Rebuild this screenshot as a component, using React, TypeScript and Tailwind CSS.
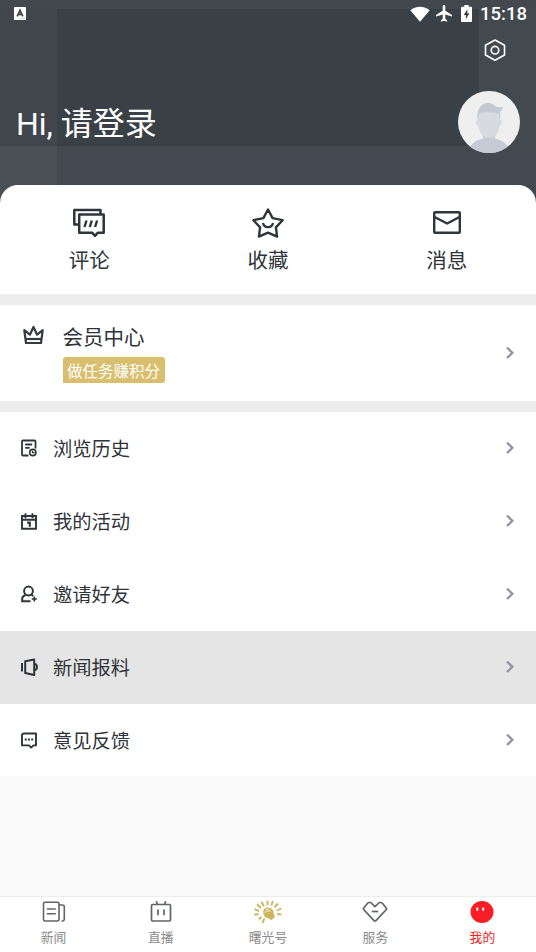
import type { ReactNode } from "react"

interface IconProps {
  className?: string
}

interface RowItem {
  label: string
  icon: ReactNode
  active?: boolean
}

function KeyboardIcon() {
  return (
    <svg className="w-3 h-[13px]" viewBox="0 0 12 13" fill="none">
      <rect width="12" height="13" rx="0.8" fill="#fff" />
      <path d="M3.2 9.3 6 3.2l2.8 6.1M4.2 7.4h3.6" stroke="#3c4349" strokeWidth="1.7" />
      <path d="M6.5 11.5h4.5" stroke="#9a9ea2" strokeWidth="0.8" strokeDasharray="1 0.6" />
    </svg>
  )
}

function WifiIcon() {
  return (
    <svg className="w-5 h-4" viewBox="0 0 20 16" fill="#fff">
      <path d="M0.3 4.2C5.5-.5 14.5-.5 19.7 4.2L10 15.8z" />
    </svg>
  )
}

function PlaneIcon() {
  return (
    <svg className="w-4 h-[17px]" viewBox="0 0 16 17" fill="#fff">
      <path d="M16 11.600V9.900L9.300 5.700V1.300a1.300 1.300 0 0 0-2.600 0v4.400L0 9.900v1.700l6.700-2.100v4.400L4.900 15.300v1.400l3.100-.9 3.100.9v-1.400l-1.800-1.400V9.500z" />
    </svg>
  )
}

function BatteryIcon() {
  return (
    <svg className="w-[11px] h-[17px]" viewBox="0 0 11 17">
      <path d="M3.300 0h4.400v1.700H10q1 0 1 1V16q0 1-1 1H1q-1 0-1-1V2.700q0-1 1-1h2.300z" fill="#fff" />
      <path d="M6.400 4.300 2.700 10h2.200v4.300l3.500-6H6.300z" fill="#3b4248" />
    </svg>
  )
}

function SettingsIcon() {
  return (
    <svg className="w-6 h-6" viewBox="0 0 24 24" fill="none" stroke="#fff" strokeWidth="1.6" strokeLinejoin="round">
      <path d="m12 2 9.500 5.200v9.800L12 22.300 2.500 17V7.200z" />
      <circle cx="12" cy="12.200" r="3.800" />
    </svg>
  )
}

function Avatar() {
  return (
    <svg className="w-[62px] h-[62px] rounded-full" viewBox="0 0 62 62">
      <rect width="62" height="62" fill="#efefef" />
      <path d="M12 58c1-6 5-8 13-10.500h12c8 2.500 12 4.500 13 10.500L44 62H18z" fill="#c5cad4" />
      <path d="M25 42h12v7q-6 4-12 0z" fill="#c5cad4" />
      <path d="M19.500 29c-2-.5-2 5 .8 6 .7 5 3 8.500 5.700 10.500 2.500 1.800 8 1.800 10.500 0 2.700-2 4.500-5.500 5.200-10.500 2.800-1 2.600-6.500.6-6l-.8-9H20z" fill="#d7dbe0" />
      <path d="M20 29c-2-9 2-17 10-17 4 0 5 1.500 8 3.500 2.500 1 5 .8 7 .5-.2 2.500-1.500 4-3.300 4.500 1 2.500.8 5.500.3 8.500l-1.200-6.500c-5-2-14-1.500-19.500-.5z" fill="#c3c9d3" />
    </svg>
  )
}

function CommentIcon() {
  return (
    <svg className="w-8 h-[30px]" viewBox="0 0 32 30" fill="none" stroke="#30343b" strokeWidth="2.5">
      <path d="M5 16.500H1.300V2H27.500v4" strokeLinejoin="round" />
      <path d="M6.200 6.500h24.500v18.300h-6L22 27.800l-2.700-3H6.200z" strokeLinejoin="round" />
      <path d="m13.500 12.500-2 6.500M18.800 12.500l-2 6.500M24.100 12.500l-2 6.500" strokeWidth="2.4" />
    </svg>
  )
}

function StarIcon() {
  return (
    <svg className="w-8 h-[30px]" viewBox="0 0 32 30" fill="none" stroke="#30343b" strokeWidth="2.4" strokeLinejoin="round">
      <path d="m16 1.500 4.600 8.600 10 2.100-6.700 7.200 1.200 9.200L16 24.700l-9.100 3.900 1.200-9.200L1.400 12.200l10-2.100z" />
      <path d="M11 15c.8 5.400 9.200 5.400 10 0" strokeWidth="2.200" />
    </svg>
  )
}

function MailIcon() {
  return (
    <svg className="w-7 h-[23px]" viewBox="0 0 28 23" fill="none" stroke="#30343b" strokeWidth="2.4" strokeLinejoin="round">
      <rect x="1.200" y="1.200" width="25.600" height="20.600" rx="0.800" />
      <path d="m1.500 6 12.700 6.500L26.500 6" />
    </svg>
  )
}

function CrownIcon() {
  return (
    <svg className="w-[21px] h-5" viewBox="0 0 21 20" fill="none" stroke="#363b42" strokeWidth="2.2" strokeLinejoin="round">
      <path d="M3 18 1.300 5.200l5.600 4.500L10.500 2l3.600 7.700 5.600-4.500L18 18z" />
      <path d="M3 14h15" />
    </svg>
  )
}

function HistoryIcon() {
  return (
    <svg className="w-4 h-[18px]" viewBox="0 0 16 18" fill="none" stroke="#30353b" strokeWidth="1.8">
      <path d="M7.500 16.500H2q-1 0-1-1v-13q0-1 1-1h11.500q1 0 1 1v7" />
      <path d="M4.200 5.500h7M4.200 8.800h4.500" />
      <circle cx="11.800" cy="13.500" r="3.100" strokeWidth="1.600" />
      <path d="M11.500 11.800v1.900h2" strokeWidth="1.200" />
    </svg>
  )
}

function CalendarIcon() {
  return (
    <svg className="w-4 h-[17px]" viewBox="0 0 16 17" fill="none" stroke="#30353b" strokeWidth="1.9">
      <path d="M1 3h14v12.700H1zM0 6.800h16M4.500 .3v5M11.500 .3v5" />
      <path d="M6.200 9.600h2.600v4.200" strokeWidth="2.100" />
    </svg>
  )
}

function InviteIcon() {
  return (
    <svg className="w-[17px] h-[18px]" viewBox="0 0 17 18" fill="none" stroke="#30353b" strokeWidth="2">
      <circle cx="7.500" cy="6" r="4.400" />
      <path d="M4.500 9.800C2.500 10.800 1.200 12 1.200 13.500v2.700h8.300M10.500 9.800q1 .6 1.800 1.300" />
      <path d="M13.300 11.500v5M10.800 14h5" strokeWidth="1.700" />
    </svg>
  )
}

function HornIcon() {
  return (
    <svg className="w-[17px] h-[18px]" viewBox="0 0 17 18" fill="none" stroke="#30353b" strokeWidth="2">
      <path d="M1 5v8.500" />
      <path d="m4.200 3.200 9-1.800v15.700l-9-2z" strokeLinejoin="round" />
      <path d="M13.500 6q2.400 0 2.400 3t-2.400 3" />
    </svg>
  )
}

function FeedbackIcon() {
  return (
    <svg className="w-4 h-[17px]" viewBox="0 0 16 17" fill="none" stroke="#30353b" strokeWidth="1.9">
      <path d="M3 1.500h12v11.900h-2.500L10.200 15.600 8 13.400H1V3.500q0-2 2-2z" strokeLinejoin="round" />
      <path d="M3.800 7.400h2M7 7.400h2M10.200 7.400h2" strokeWidth="2" />
    </svg>
  )
}

function Chevron({ className }: IconProps) {
  return (
    <svg className={className} width="8" height="14" viewBox="0 0 8 14" fill="none" stroke="#9293a5" strokeWidth="2.3">
      <path d="m1 1.600 5.400 5.200L1 12" />
    </svg>
  )
}

function NewsIcon() {
  return (
    <svg className="w-6 h-6" viewBox="0 0 24 24" fill="none" stroke="#62646b" strokeWidth="1.6">
      <rect x="1.500" y="2.300" width="15.500" height="18.700" rx="1.500" />
      <path d="M4.800 9h9M4.800 13.800h9M17 5h3.300q2 0 2 2v12q0 2-2 2h-.8" />
    </svg>
  )
}

function LiveIcon() {
  return (
    <svg className="w-6 h-6" viewBox="0 0 24 24" fill="none" stroke="#62646b" strokeWidth="1.7">
      <rect x="2.500" y="4.500" width="19" height="16.500" rx="1.200" />
      <path d="m7.300 1.200 1.200 3.300M16.700 1.200l-1.200 3.300M9 9.500v5.800M15 9.500v5.800" />
    </svg>
  )
}

function SunIcon() {
  return (
    <svg className="w-[30px] h-6" viewBox="0 0 30 24" fill="none" stroke="#cfb45f">
      <path
        d="m1.300 14.800 4.500-.7M1.500 9.200l4.600 1.900M4 4.300l4 3.700M8.500 1.800l2.400 4.400M14.500 .7v4.500M19.800 1l-1.400 4.500M25 3.500l-3.500 3.800M28.300 8.500l-4.700 2M28.500 14.600l-4.400-.8M5.800 19.300 8.500 17M9.300 23.200l2.200-4.700"
        strokeWidth="1.9"
      />
      <path d="M10.300 12.800c-.8-3.500 2-5.600 5-5.400 3.300.2 5.700 2.800 5.300 6l1.400 3.700-3.600 3-3.200-1.800c-2.900 0-4.600-2.200-4.900-5.500z" fill="#cfb45f" stroke="none" />
      <path d="M11.500 12.800c1.200-1.500 4.700-2.300 6.500-1.800M12.500 9.700l3.600-.8" stroke="#fff" strokeWidth=".8" />
    </svg>
  )
}

function ServiceIcon() {
  return (
    <svg className="w-[26px] h-6" viewBox="0 0 26 24" fill="none" stroke="#62646b" strokeWidth="1.7" strokeLinejoin="round">
      <path d="M7 2.500h1.700L13 6.600l4.300-4.100H19q.7 0 1.200.5l4.200 5.200q.5.700-.1 1.300L14 20.700q-1 .9-2 0L1.700 9.500q-.6-.6-.1-1.300L5.800 3q.5-.5 1.200-.5z" />
      <path d="M9.800 11.500h6.400" />
    </svg>
  )
}

function MineIcon() {
  return (
    <svg className="w-6 h-6" viewBox="0 0 24 24">
      <ellipse cx="12" cy="12" rx="11.500" ry="11" fill="#fb1d25" />
      <path d="M7.300 7.500v3.300M13.200 7.500v3.300" stroke="#fff" strokeWidth="2" />
    </svg>
  )
}

const shortcuts = [
  { label: "评论", icon: <CommentIcon /> },
  { label: "收藏", icon: <StarIcon /> },
  { label: "消息", icon: <MailIcon /> },
]

const rows: RowItem[] = [
  { label: "浏览历史", icon: <HistoryIcon /> },
  { label: "我的活动", icon: <CalendarIcon /> },
  { label: "邀请好友", icon: <InviteIcon /> },
  { label: "新闻报料", icon: <HornIcon />, active: true },
  { label: "意见反馈", icon: <FeedbackIcon /> },
]

const tabs = [
  { label: "新闻", icon: <NewsIcon /> },
  { label: "直播", icon: <LiveIcon /> },
  { label: "曙光号", icon: <SunIcon /> },
  { label: "服务", icon: <ServiceIcon /> },
  { label: "我的", icon: <MineIcon />, active: true },
]

export default function App() {
  return (
    <div className="w-[536px] h-[952px] flex flex-col overflow-hidden bg-[#fafafa] text-[#30343a] font-[Roboto,'Noto_Sans_CJK_SC',sans-serif]">
      {/* Header */}
      <header className="relative h-[205px] shrink-0 bg-[#41474d] text-white">
        {/* Overlapping tinted panels behind the greeting */}
        <div className="absolute inset-0 grid grid-cols-[57px_422px_1fr] grid-rows-[9px_137px_1fr]">
          <div className="col-span-3 bg-[#43484f]" />
          <div className="bg-[#41464c]" />
          <div className="bg-[#3a4146]" />
          <div className="bg-[#42494f]" />
          <div className="bg-[#4b4f56]" />
          <div className="col-span-2 bg-[#424950]" />
        </div>

        <div className="relative">
          <div className="h-[27px] flex items-center justify-between pl-3.5 pr-[9px]">
            <KeyboardIcon />
            <div className="flex items-center">
              <WifiIcon />
              <span className="ml-1.5">
                <PlaneIcon />
              </span>
              <span className="ml-[9px]">
                <BatteryIcon />
              </span>
              <span className="ml-2 pt-px text-[18.5px] leading-[27px] font-medium">15:18</span>
            </div>
          </div>
          <div className="h-[45px] flex justify-end items-center pr-[29px]">
            <SettingsIcon />
          </div>
          <div className="mt-[19px] h-[62px] flex items-center justify-between pl-4 pr-4">
            <h1 className="pt-[3px] text-[32px] leading-[62px]">Hi, 请登录</h1>
            <Avatar />
          </div>
        </div>
      </header>

      {/* Shortcuts */}
      <section className="relative -mt-5 h-[109px] shrink-0 grid grid-cols-3 bg-white rounded-t-[18px]">
        {shortcuts.map((item) => (
          <div key={item.label} className="flex flex-col items-center pt-[22px]">
            <div className="h-[31px] flex items-center">{item.icon}</div>
            <span className="mt-2 text-[20.5px] leading-[30px]">{item.label}</span>
          </div>
        ))}
      </section>

      {/* Member center */}
      <section className="h-[118px] shrink-0 flex items-center border-y-11 border-[#ededed] bg-white pl-[23px] pr-[22px]">
        <div className="self-start pt-5">
          <CrownIcon />
        </div>
        <div className="ml-[18.5px] self-start pt-[18px] flex flex-col items-start">
          <span className="text-[20.5px] leading-[30px]">会员中心</span>
          <span className="mt-1 h-[26px] pt-0.5 px-[4.5px] rounded-[3px] rounded-bl-none bg-[#d9be6e] text-white text-[15.5px] leading-[26px]">
            做任务赚积分
          </span>
        </div>
        <Chevron className="ml-auto" />
      </section>

      {/* Menu */}
      <section className="h-[364px] shrink-0 overflow-hidden bg-white">
        {rows.map((row) => (
          <div
            key={row.label}
            className={`h-[73px] flex items-center pl-5 pr-[22px] pb-px ${row.active ? "bg-[#e5e5e5]" : ""}`}
          >
            <span className="w-[33px] pl-px">{row.icon}</span>
            <span className="pt-[3px] text-[19.3px] leading-7">{row.label}</span>
            <Chevron className="ml-auto" />
          </div>
        ))}
      </section>

      {/* Bottom tabs */}
      <nav className="mt-auto h-14 shrink-0 grid grid-cols-5 border-t border-[#ececec] bg-white">
        {tabs.map((tab) => (
          <div key={tab.label} className="flex flex-col items-center pt-[3px]">
            {tab.icon}
            <span className={`mt-1 text-[12.8px] leading-5 ${tab.active ? "text-[#fb1d25]" : "text-[#8b8b8b]"}`}>
              {tab.label}
            </span>
          </div>
        ))}
      </nav>
    </div>
  )
}
